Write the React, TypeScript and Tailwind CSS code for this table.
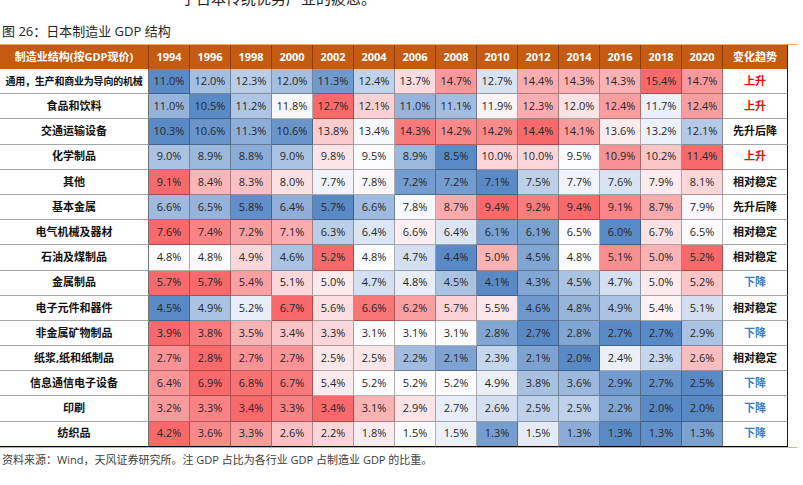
import React from "react";

const YEARS = ["1994","1996","1998","2000","2002","2004","2006","2008","2010","2012","2014","2016","2018","2020"];

type Trend = "up" | "down" | "stable" | "upDown";

const ROWS: { name: string; vals: number[]; trend: Trend }[] = [
  { name: "通用，生产和商业为导向的机械", vals: [11.0,12.0,12.3,12.0,11.3,12.4,13.7,14.7,12.7,14.4,14.3,14.3,15.4,14.7], trend: "up" },
  { name: "食品和饮料", vals: [11.0,10.5,11.2,11.8,12.7,12.1,11.0,11.1,11.9,12.3,12.0,12.4,11.7,12.4], trend: "up" },
  { name: "交通运输设备", vals: [10.3,10.6,11.3,10.6,13.8,13.4,14.3,14.2,14.2,14.4,14.1,13.6,13.2,12.1], trend: "upDown" },
  { name: "化学制品", vals: [9.0,8.9,8.8,9.0,9.8,9.5,8.9,8.5,10.0,10.0,9.5,10.9,10.2,11.4], trend: "up" },
  { name: "其他", vals: [9.1,8.4,8.3,8.0,7.7,7.8,7.2,7.2,7.1,7.5,7.7,7.6,7.9,8.1], trend: "stable" },
  { name: "基本金属", vals: [6.6,6.5,5.8,6.4,5.7,6.6,7.8,8.7,9.4,9.2,9.4,9.1,8.7,7.9], trend: "upDown" },
  { name: "电气机械及器材", vals: [7.6,7.4,7.2,7.1,6.3,6.4,6.6,6.4,6.1,6.1,6.5,6.0,6.7,6.5], trend: "stable" },
  { name: "石油及煤制品", vals: [4.8,4.8,4.9,4.6,5.2,4.8,4.7,4.4,5.0,4.5,4.8,5.1,5.0,5.2], trend: "stable" },
  { name: "金属制品", vals: [5.7,5.7,5.4,5.1,5.0,4.7,4.8,4.5,4.1,4.3,4.5,4.7,5.0,5.2], trend: "down" },
  { name: "电子元件和器件", vals: [4.5,4.9,5.2,6.7,5.6,6.6,6.2,5.7,5.5,4.6,4.8,4.9,5.4,5.1], trend: "stable" },
  { name: "非金属矿物制品", vals: [3.9,3.8,3.5,3.4,3.3,3.1,3.1,3.1,2.8,2.7,2.8,2.7,2.7,2.9], trend: "down" },
  { name: "纸浆,纸和纸制品", vals: [2.7,2.8,2.7,2.7,2.5,2.5,2.2,2.1,2.3,2.1,2.0,2.4,2.3,2.6], trend: "stable" },
  { name: "信息通信电子设备", vals: [6.4,6.9,6.8,6.7,5.4,5.2,5.2,5.2,4.9,3.8,3.6,2.9,2.7,2.5], trend: "down" },
  { name: "印刷", vals: [3.2,3.3,3.4,3.3,3.4,3.1,2.9,2.7,2.6,2.5,2.5,2.2,2.0,2.0], trend: "down" },
  { name: "纺织品", vals: [4.2,3.6,3.3,2.6,2.2,1.8,1.52,1.47,1.3,1.46,1.33,1.26,1.27,1.31], trend: "down" },
];

const BLUE = [90, 138, 198];
const WHITE = [252, 252, 255];
const RED = [248, 105, 107];

function lerp(a: number[], b: number[], t: number) {
  const c = a.map((x, i) => Math.round(x + (b[i] - x) * t));
  return `rgb(${c[0]},${c[1]},${c[2]})`;
}

function scale(vals: number[]) {
  const s = [...vals].sort((a, b) => a - b);
  const n = s.length;
  const pos = (n - 1) * 0.5;
  const lo = Math.floor(pos);
  const hi = Math.ceil(pos);
  const mid = s[lo] + (s[hi] - s[lo]) * (pos - lo);
  const min = s[0];
  const max = s[n - 1];
  return (v: number) => {
    if (v <= mid) {
      const t = mid === min ? 1 : (v - min) / (mid - min);
      return lerp(BLUE, WHITE, t);
    }
    const t = (v - mid) / (max - mid);
    return lerp(WHITE, RED, t);
  };
}

function TrendLabel({ trend }: { trend: Trend }) {
  if (trend === "up") return <span className="text-[#ff0000]">上升</span>;
  if (trend === "down") return <span className="text-[#3b7ec6]">下降</span>;
  if (trend === "upDown") return <span className="text-[#111]">先升后降</span>;
  return <span className="text-[#111]">相对稳定</span>;
}

const FONT = { fontFamily: '"Open Sans","Noto Sans CJK SC",sans-serif' } as const;

export default function App() {
  return (
    <div
      className="w-[803px] h-[485px] overflow-hidden bg-white text-[#222]"
      style={FONT}
    >
      <div className="-mt-[9px] pl-[181px] text-[15px] leading-[15px] text-[#222] whitespace-nowrap">
        于日本传统优势产业的疲态。
      </div>
      <div className="mt-[19px] pl-[2px] text-[13px] leading-[13px] text-[#262626] whitespace-nowrap">
        图 26：日本制造业 GDP 结构
      </div>
      <div className="mt-[6px] w-[797px] border-t border-[#f4a868]">
        <div className="w-[788px] grid grid-cols-[149px_repeat(14,41px)_65px]">
          <div className="h-[24px] bg-[#c55a11] border-r border-[#8a3a0c] flex items-center justify-center text-white font-bold text-[11px] whitespace-nowrap">
            制造业结构(按GDP现价)
          </div>
          {YEARS.map((y) => (
            <div
              key={y}
              className="h-[24px] bg-[#c55a11] border-r border-[#8a3a0c] flex items-center justify-center text-white font-bold text-[11px]"
            >
              {y}
            </div>
          ))}
          <div className="h-[24px] bg-[#c55a11] border-r border-[#5a2608] flex items-center justify-center text-white font-bold text-[11px]">
            变化趋势
          </div>

          {ROWS.map((row, ri) => {
            const col = scale(row.vals);
            const last = ri === ROWS.length - 1;
            return (
              <React.Fragment key={row.name}>
                <div
                  className={`h-[25.2px] flex items-center justify-center font-bold text-[#111] whitespace-nowrap border-r border-[#6f6f6f] ${
                    ri === 0 ? "text-[10px] tracking-[-0.2px]" : "text-[11px]"
                  } ${last ? "border-b border-b-black" : "border-b border-b-[#a6a6a6]"}`}
                >
                  {row.name}
                </div>
                {row.vals.map((v, ci) => (
                  <div
                    key={ci}
                    className={`h-[25.2px] flex items-center justify-center text-[11px] text-[#262626] border-r border-r-black/30 ${
                      last ? "border-b border-b-black" : "border-b border-b-black/30"
                    }`}
                    style={{ backgroundColor: col(v) }}
                  >
                    {v.toFixed(1)}%
                  </div>
                ))}
                <div
                  className={`h-[25.2px] flex items-center justify-center font-bold text-[11px] border-r border-r-[#1a1a1a] ${
                    last ? "border-b border-b-black" : "border-b border-b-[#a6a6a6]"
                  }`}
                >
                  <TrendLabel trend={row.trend} />
                </div>
              </React.Fragment>
            );
          })}
        </div>
        <div className="w-[797px] h-px bg-[#f4a868]" />
      </div>
      <div className="mt-[5px] pl-[2px] text-[11px] leading-[14px] text-[#404040] whitespace-nowrap">
        资料来源：Wind，天风证券研究所。注 GDP 占比为各行业 GDP 占制造业 GDP 的比重。
      </div>
    </div>
  );
}
